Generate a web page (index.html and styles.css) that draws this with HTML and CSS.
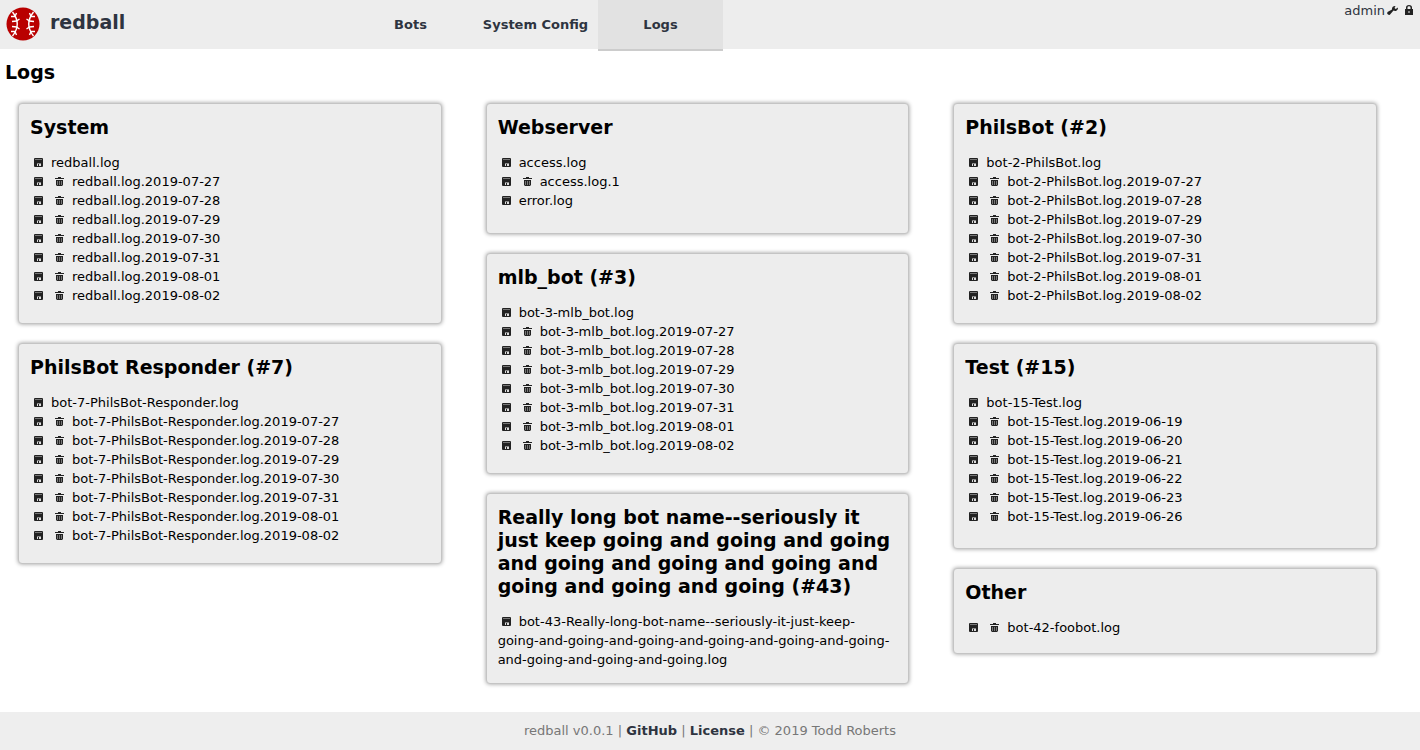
FILE: index.html
```html
<!DOCTYPE html>
<html lang="en">
<head>
<meta charset="utf-8">
<title>redball - Logs</title>
<link rel="stylesheet" href="styles.css">
</head>
<body>
<svg class="sprite" aria-hidden="true">
  <symbol id="i-disk" viewBox="0 0 16 16"><rect x="4" y="4" width="9" height="9" rx="1" fill="#222"/><path fill="#777" d="M5 5h7v1H5z"/><path fill="#888" d="M7 9h4v1H7z"/><path fill="#ddd" d="M7 10h4v2H7z"/><path fill="#222" d="M8 10h1v2H8z"/></symbol>
  <symbol id="i-trash" viewBox="0 0 16 16"><path fill="#222" d="M7 4h3v1h3v1H4V5h3zM5 7h7v5l-1 1H6l-1-1z"/><path fill="#777" d="M6 8h1v4H6zM8 8h1v4H8zM10 8h1v4h-1z"/></symbol>
  <symbol id="i-wrench" viewBox="0 0 16 16"><path fill="#222" d="M13 5.500a3 3 0 0 1-4.500 3L5.500 12a1.600 1.600 0 0 1-3-2L7 7.500A3 3 0 0 1 10.500 4L9.500 6l1.200 1z"/></symbol>
  <symbol id="i-lock" viewBox="0 0 16 16"><path fill="#222" fill-rule="evenodd" d="M5 7V5.500a3 2.500 0 0 1 6 0V7h1v6H4V7zM6.500 7h3V5.500a1.500 1.300 0 0 0-3 0zM7.500 9v2h1V9z"/></symbol>
</svg>
<header class="topbar">
  <a class="brand" href="#">
    <svg class="logo" viewBox="0 0 34 34" aria-hidden="true">
      <circle cx="17" cy="17" r="16.500" fill="#b90000"/>
      <g fill="none" stroke="#fff" stroke-width="1.400">
        <path d="M6.500 5Q16 17 6.500 29M27.500 5Q18 17 27.500 29"/>
        <path d="M5 9.500l4 0 1.500-3.500M6 14.500l4.500-.5 3-2M6 19.500l4.500.5 3 2M5 24.500l4 0 1.500 3.500M29 9.500l-4 0-1.500-3.500M28 14.500l-4.500-.5-3-2M28 19.500l-4.500.5-3 2M29 24.500l-4 0-1.500 3.500"/>
      </g>
    </svg>
    <span>redball</span>
  </a>
  <nav class="tabs">
    <a class="tab" href="#">Bots</a>
    <a class="tab" href="#">System Config</a>
    <a class="tab tab-active" href="#">Logs</a>
  </nav>
  <div class="account">
    <a href="#">admin</a>
    <a href="#" aria-label="Settings"><svg class="icon"><use href="#i-wrench"/></svg></a>
    <a href="#" aria-label="Log out"><svg class="icon"><use href="#i-lock"/></svg></a>
  </div>
</header>
<main class="page">
  <h1>Logs</h1>
  <div class="cards" id="cards"></div>
</main>
<footer class="footer">redball v0.0.1 | <a href="#">GitHub</a> | <a href="#">License</a> | © 2019 Todd Roberts</footer>
<script src="logs.js"></script>
</body>
</html>
```

FILE: styles.css
```css
* { box-sizing: border-box; }
body {
  margin: 0;
  min-height: 100vh;
  display: flex;
  flex-direction: column;
  background: #fff;
  color: #000;
  font: 13px/19px Verdana, "DejaVu Sans", sans-serif;
}
a { color: #2e3440; text-decoration: none; }
.sprite { display: none; }
.topbar {
  display: flex;
  align-items: flex-start;
  height: 49px;
  background: #ededed;
}
.brand {
  display: flex;
  gap: 10px;
  width: 348px;
  padding: 7px 6px;
  font-size: 19px;
  line-height: 30px;
  font-weight: bold;
}
.logo { width: 34px; height: 34px; }
.tabs { display: flex; }
.tab {
  width: 125px;
  height: 51px;
  line-height: 49px;
  text-align: center;
  white-space: nowrap;
  font-weight: bold;
}
.tab-active { background: #e2e2e2; border-bottom: 2px solid #ccc; }
.account { display: flex; margin-left: auto; padding: 1px 3px 0 0; }
.icon { width: 16px; height: 16px; vertical-align: -3px; }
.page { flex: 1; }
h1 { margin: 0; padding: 12px 5px 19px; font-size: 19px; line-height: 23px; }
.cards {
  display: grid;
  grid-template-columns: repeat(3, minmax(0, 1fr));
  grid-auto-rows: 15px;
  grid-auto-flow: dense;
  column-gap: 44px;
  padding: 0 43px 0 18px;
}
.card {
  margin-bottom: 19px;
  padding: 0 14px 0 11px;
  background: #ededed;
  border: 1px solid #c4c4c4;
  border-radius: 4px;
  box-shadow: 0 0 4px #999;
}
.card-body { padding: 12px 0 14px; }
.card h2 { margin: 0 0 14px; font-size: 19px; line-height: 23px; }
.card ul { margin: 0; padding: 0; list-style: none; }
.card li a { color: #000; }
.card li .action { margin-right: 5px; }
.footer {
  padding: 9px 0 10px;
  background: #eee;
  color: #777;
  text-align: center;
}
.footer a { font-weight: bold; }
```

FILE: logs.js
```js
function dated(base, dates) {
  return [base].concat(dates.map(function (d) { return base + "." + d; }));
}
var week = ["2019-07-27", "2019-07-28", "2019-07-29", "2019-07-30", "2019-07-31", "2019-08-01", "2019-08-02"];
var june = ["2019-06-19", "2019-06-20", "2019-06-21", "2019-06-22", "2019-06-23", "2019-06-26"];
var groups = [
  { title: "System", files: dated("redball.log", week) },
  { title: "Webserver", files: ["access.log", "access.log.1", "error.log"] },
  { title: "PhilsBot (#2)", files: dated("bot-2-PhilsBot.log", week) },
  { title: "mlb_bot (#3)", files: dated("bot-3-mlb_bot.log", week) },
  { title: "PhilsBot Responder (#7)", files: dated("bot-7-PhilsBot-Responder.log", week) },
  { title: "Test (#15)", files: dated("bot-15-Test.log", june) },
  { title: "Really long bot name--seriously it just keep going and going and going and going and going and going and going and going and going (#43)",
    files: ["bot-43-Really-long-bot-name--seriously-it-just-keep-going-and-going-and-going-and-going-and-going-and-going-and-going-and-going-and-going.log"] },
  { title: "Other", files: ["bot-42-foobot.log"], removable: true }
];

function action(icon, label) {
  return '<a class="action" href="#" aria-label="' + label + '"><svg class="icon"><use href="#' + icon + '"/></svg></a>';
}

var cards = document.getElementById("cards");
cards.innerHTML = groups.map(function (g) {
  return '<section class="card"><div class="card-body"><h2>' + g.title + "</h2><ul>" +
    g.files.map(function (f) {
      var rotated = g.removable || !/\.log$/.test(f);
      return "<li>" + action("i-disk", "Download " + f) + (rotated ? action("i-trash", "Delete " + f) : "") +
        '<a href="#">' + f + "</a></li>";
    }).join("") + "</ul></div></section>";
}).join("");

// Each card spans as many 15px grid rows as its content, border and margin need.
function layout() {
  cards.querySelectorAll(".card").forEach(function (card) {
    var height = card.firstElementChild.offsetHeight + 21;
    card.style.gridRowEnd = "span " + Math.ceil(height / 15);
  });
}
layout();
window.addEventListener("resize", layout);
```
